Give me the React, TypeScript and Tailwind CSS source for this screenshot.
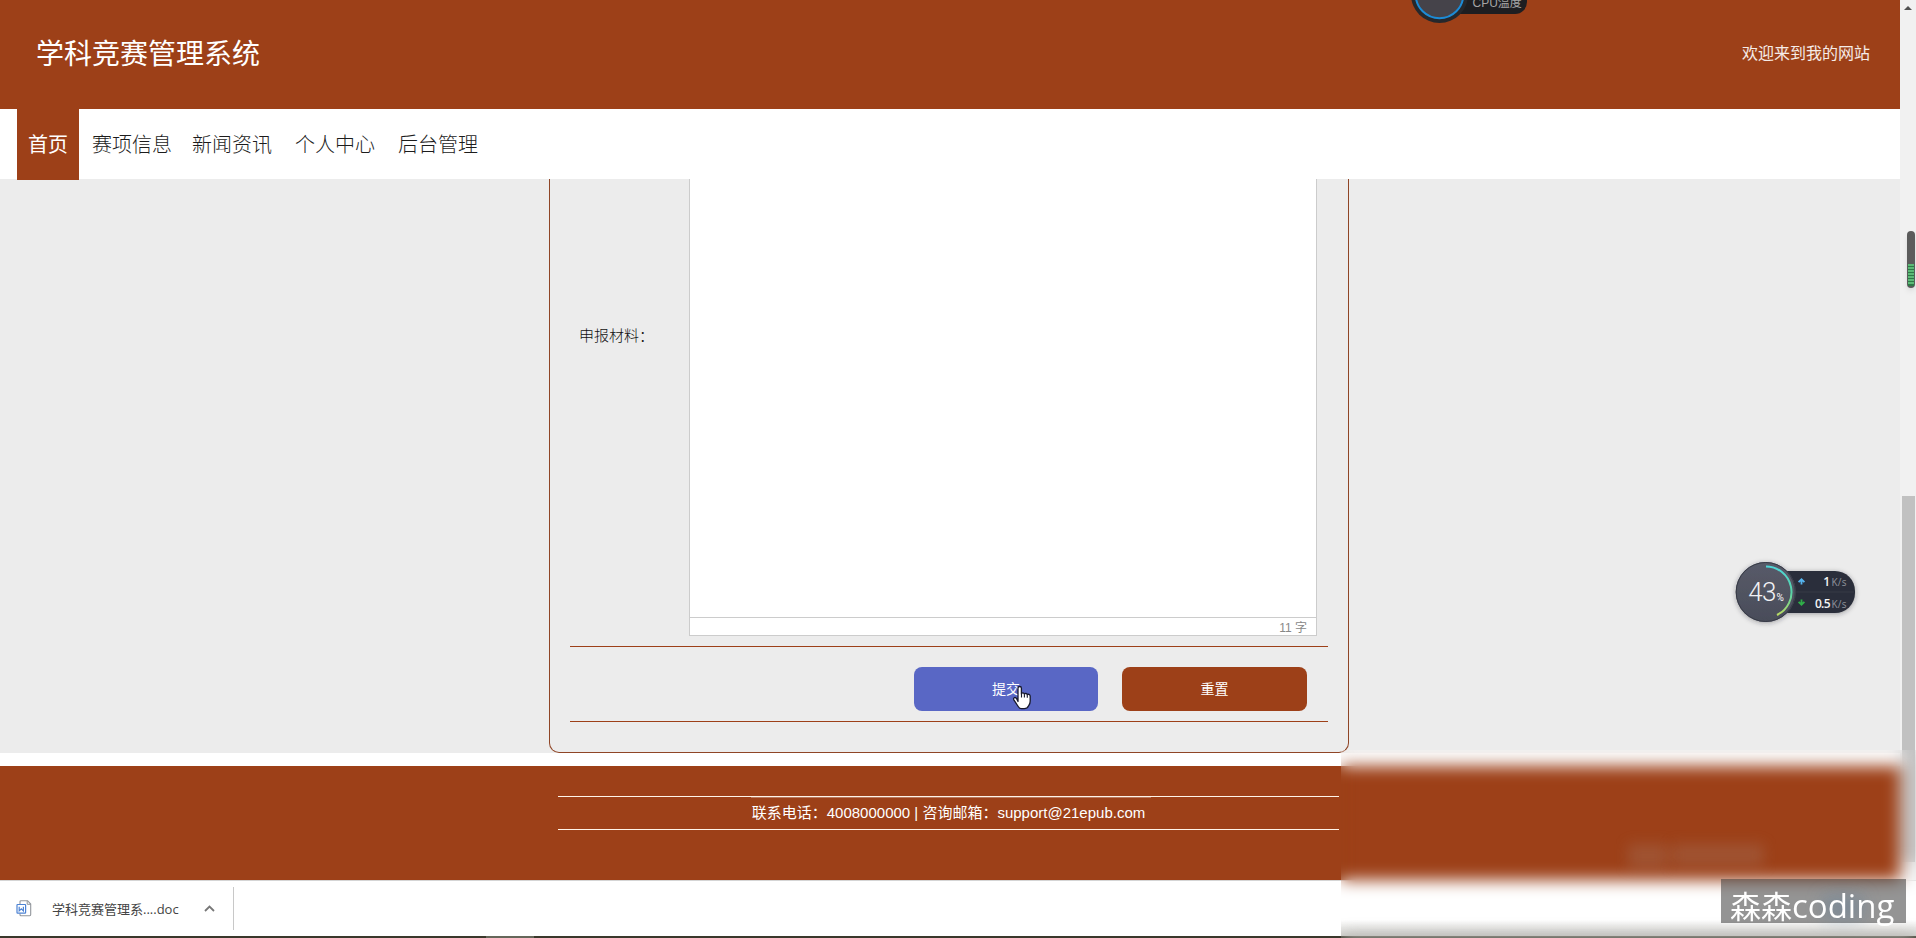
import React from "react";

const navItems = [
  { label: "赛项信息", className: "ml-[13px]" },
  { label: "新闻资讯", className: "ml-5" },
  { label: "个人中心", className: "ml-[23px]" },
  { label: "后台管理", className: "ml-[23px]" },
];

function Header() {
  return (
    <header className="flex h-[109px] shrink-0 items-center justify-between bg-[#9d4018] pl-[36px] pr-[30px] text-white">
      <h1 className="text-[28px] leading-8">学科竞赛管理系统</h1>
      <span className="-mt-px text-base text-white/90">欢迎来到我的网站</span>
    </header>
  );
}

function Nav() {
  return (
    <nav className="z-10 flex h-[70px] shrink-0 items-start bg-white pl-[17px] text-xl font-light text-[#1c1c1c]">
      <a className="flex h-[71px] w-[62px] items-center justify-center bg-[#9d4018] font-normal text-white">首页</a>
      {navItems.map((item) => (
        <a key={item.label} className={`flex h-[70px] items-center pt-0.5 ${item.className}`}>
          {item.label}
        </a>
      ))}
    </nav>
  );
}

function FormCard() {
  return (
    <main className="flex h-[574px] shrink-0 justify-center bg-[#ececec] pr-[2px]">
      <section className="flex w-[800px] flex-col rounded-b-[10px] border border-t-0 border-[#8f4526] px-5">
        <div className="flex h-[468px] shrink-0 border-b border-[#9d4018]">
          <label className="w-[119px] shrink-0 pl-[9px] pt-[146px] text-[15px] font-light leading-[22px] text-[#111]">
            申报材料：
          </label>
          <div className="flex h-[457px] w-[628px] flex-col border border-t-0 border-[#ccc] bg-white">
            <div className="grow" />
            <div className="flex h-[18px] items-center justify-end border-t border-[#ccc] pr-[9px] pt-0.5 text-xs text-[#888]">
              <span>11 字</span>
            </div>
          </div>
        </div>
        <div className="flex h-[75px] shrink-0 items-start justify-end gap-6 border-b border-[#9d4018] pr-[21px] pt-5 text-sm text-white">
          <button className="h-11 w-[184px] rounded-lg bg-[#5967c5]">提交</button>
          <button className="h-11 w-[185px] rounded-lg bg-[#9d4018]">重置</button>
        </div>
      </section>
    </main>
  );
}

function Footer() {
  return (
    <footer className="mt-[13px] flex h-[114px] shrink-0 justify-center bg-[#9d4018] pr-[3px] pt-[30px]">
      <div className="flex h-[34px] w-[781px] items-center justify-center border-y border-[#fff4e8] text-[15px] text-white">
        <span className="relative flex h-8 items-center px-px">
          <i className="absolute left-0 top-0 h-px w-[400px] bg-white/30" />
          联系电话：4008000000 | 咨询邮箱：support@21epub.com
        </span>
      </div>
    </footer>
  );
}

function Scrollbar() {
  return (
    <aside className="flex w-4 shrink-0 flex-col items-center bg-[#f1f1f1]">
      <svg className="mt-[5px] h-[5px] w-2" viewBox="0 0 8 5">
        <path d="M0 5 4 1l4 4z" fill="#505050" />
      </svg>
      <div className="ml-px mt-[486px] h-[366px] w-[13px] bg-[#c1c1c1]" />
    </aside>
  );
}

function DownloadBar() {
  return (
    <div className="flex h-[56px] shrink-0 items-start border-t border-[#d5d5d5] bg-white">
      <svg className="ml-[16px] mt-[19px] h-[17px] w-4" viewBox="0 0 16 17" fill="none">
        <path d="M4 4V1.5Q4 .7 5 .7h6.6L14.7 4v10.5q0 1.2-1 1.2H5q-1 0-1-1v-1.2" stroke="#92969c" strokeWidth="1.1" />
        <path d="M11.2.8v3.5h3.500" stroke="#92969c" />
        <rect x="1" y="4.500" width="8.600" height="8.600" rx=".6" fill="#fff" stroke="#4d83d4" strokeWidth="1.200" />
        <path d="M3.200 6.700v4.200l2.100-2 2.100 2V6.700" stroke="#4d83d4" strokeWidth="1.200" />
      </svg>
      <span className="ml-5 mt-[18px] w-[129px] whitespace-nowrap font-['Open_Sans','Noto_Sans_CJK_SC',sans-serif] text-[13px] leading-5 text-[#444]">
        学科竞赛管理系....doc
      </span>
      <svg className="ml-[23px] mt-[24px] h-[7px] w-[11px]" viewBox="0 0 11 7" fill="none">
        <path d="m1 6 4.500-4.500L10 6" stroke="#777" strokeWidth="1.800" />
      </svg>
      <i className="ml-[18px] mt-1.5 h-[43px] w-px bg-[#c8c8c8]" />
    </div>
  );
}

function CpuWidget() {
  return (
    <svg className="absolute left-[1406px] top-0 h-7 w-[126px]" viewBox="0 0 126 28">
      <rect x="30" y="-20" width="91" height="34" rx="12" fill="#1e1e21" />
      <circle cx="33.500" cy="-5.500" r="28.500" fill="#26282c" />
      <circle cx="33.500" cy="-5.500" r="23.800" fill="#45434a" stroke="#1c8bd6" strokeWidth="2" />
      <text x="66.500" y="6.500" fontSize="12" fill="#a5a5a5">
        CPU温度
      </text>
    </svg>
  );
}

function NetWidget() {
  return (
    <svg className="absolute left-[1726px] top-[551px] h-[82px] w-[140px]" viewBox="0 0 140 82">
      <defs>
        <linearGradient id="arc" x1="0" y1="0" x2="0" y2="1">
          <stop offset="0" stopColor="#4fd6d8" />
          <stop offset=".55" stopColor="#58d3a6" />
          <stop offset="1" stopColor="#b9db62" />
        </linearGradient>
        <linearGradient id="disc" x1="0" y1="0" x2="0" y2="1">
          <stop offset="0" stopColor="#585b69" />
          <stop offset="1" stopColor="#494c59" />
        </linearGradient>
        <filter id="shade" x="-20%" y="-20%" width="140%" height="140%">
          <feDropShadow dx="0" dy="1" stdDeviation="2.500" floodColor="#223" floodOpacity=".4" />
        </filter>
      </defs>
      <g filter="url(#shade)">
        <rect x="40" y="20" width="89" height="42" rx="20" fill="#2a2f3a" />
        <circle cx="39.700" cy="41" r="30" fill="url(#disc)" />
      </g>
      <circle cx="39.700" cy="41" r="29.500" fill="none" stroke="#373a46" />
      <path d="M69 41h59" stroke="#3a3f4a" strokeWidth=".8" />
      <path d="M40 15.500A25.500 25.500 0 0 1 51 64" fill="none" stroke="url(#arc)" strokeWidth="2" />
      <g fontFamily="Roboto, sans-serif">
        <text x="22.300" y="49.500" fontSize="26" fontWeight="300" fill="#f1f1f4" textLength="28">
          43
        </text>
        <text x="50.500" y="49.500" fontSize="10" fill="#fff">
          %
        </text>
      </g>
      <g fontFamily="Open Sans, sans-serif" textAnchor="end">
        <text x="104" y="34.500" fontSize="12" fontWeight="600" fill="#f4f4f4">1</text>
        <text x="104.500" y="56.500" fontSize="12" fontWeight="600" fill="#f4f4f4" textLength="15.500">0.5</text>
        <text x="120.500" y="35" fontSize="10" fill="#8f939c" textLength="15">K/s</text>
        <text x="120.500" y="56.500" fontSize="10" fill="#8f939c" textLength="15">K/s</text>
      </g>
      <path d="M75.500 33.500v-5m-2.900 2.700 2.900-2.900 2.900 2.900" fill="none" stroke="#55b4ef" strokeWidth="1.800" />
      <path d="M75.500 48.500v5m-2.900-2.700 2.900 2.900 2.900-2.900" fill="none" stroke="#2fae48" strokeWidth="1.800" />
    </svg>
  );
}

function SideMeter() {
  return (
    <div className="absolute left-[1907px] top-[231px] flex h-[57px] w-2 flex-col justify-end overflow-hidden rounded-full bg-[#5c5c5c] px-px pb-[2px] shadow-md">
      <div className="flex h-[22px] flex-col gap-px bg-[#2f7a48]">
        {Array.from({ length: 7 }, (_, i) => (
          <i key={i} className="h-[2px] bg-[#5dba77]" />
        ))}
      </div>
    </div>
  );
}

function HandCursor() {
  return (
    <svg className="absolute left-[1012px] top-[685px] h-[25px] w-[20px]" viewBox="0 0 20 25">
      <path
        d="M6 16.500V3.200Q6 1.500 7.700 1.500T9.400 3.200V9Q9.600 7.700 11 7.900T12.400 9.300Q12.800 8.200 14.100 8.500T15.300 10Q15.800 9 17 9.400T18.200 11.200V16q0 2.800-1.600 4.800-1.300 2.900-4.400 2.900H9.500q-2 0-3.300-2.200L2 15.100q-.9-1.700.2-2.400 1-.7 2.300.7z"
        fill="#fff"
        stroke="#16182c"
        strokeWidth="1.300"
        strokeLinejoin="round"
      />
      <path d="M9.500 9v3.500M12.400 9.500v3M15.300 10.200v2.600" stroke="#16182c" strokeWidth="1.100" />
    </svg>
  );
}

export default function App() {
  return (
    <div className="relative flex h-[938px] w-[1916px] flex-col overflow-hidden bg-white font-['Liberation_Sans','Noto_Sans_CJK_SC',sans-serif]">
      <div className="flex h-[880px] shrink-0">
        <div className="flex w-[1900px] flex-col bg-white">
          <Header />
          <Nav />
          <FormCard />
          <Footer />
        </div>
        <Scrollbar />
      </div>
      <DownloadBar />
      <div className="flex h-[2px] shrink-0 bg-[#3a382b] pl-[486px]">
        <i className="w-12 bg-[#66675a]" />
      </div>

      <HandCursor />
      <CpuWidget />
      <NetWidget />
      <SideMeter />

      <div className="absolute left-[1341px] top-[750px] h-[188px] w-[575px] bg-linear-to-t from-[#3a382b]/25 to-transparent to-[18px] backdrop-blur-[8px]" />
      <div className="absolute left-[1628px] top-[844px] h-6 w-10 bg-[#a8a29a]/20 blur-[7px]" />
      <div className="absolute left-[1672px] top-[844px] h-[22px] w-[92px] bg-[#a8a29a]/20 blur-[7px]" />
      <div className="absolute left-[1721px] top-[879px] flex h-11 w-[185px] items-center bg-[#3c3c3c]/55 pl-[9px]">
        <i className="absolute left-[102px] top-4 h-6 w-10 bg-[#5f7c98]/40 blur-[8px]" />
        <span className="relative mt-[9px] flex items-baseline whitespace-nowrap font-['Open_Sans','Noto_Sans_CJK_SC',sans-serif] text-[31px] leading-[44px] text-white">
          森森<span className="text-[33px]">coding</span>
        </span>
      </div>
    </div>
  );
}
